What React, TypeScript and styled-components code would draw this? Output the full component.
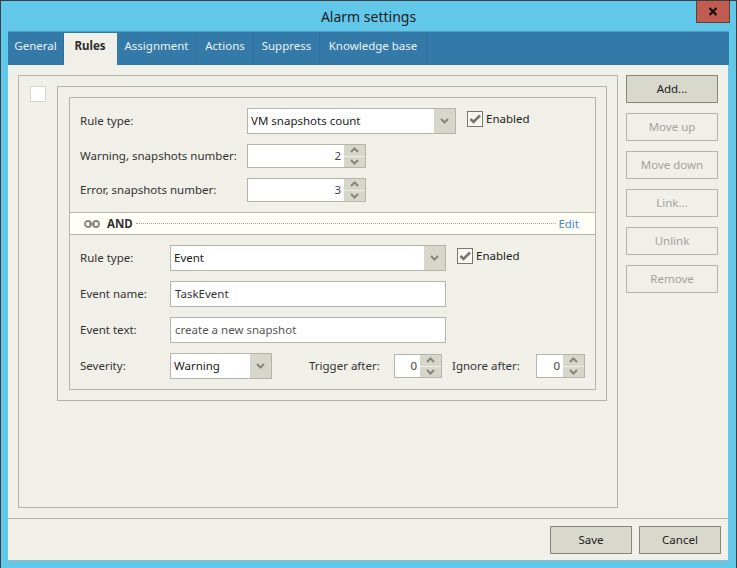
import React from 'react'
import styled, { createGlobalStyle } from 'styled-components'

const GlobalStyle = createGlobalStyle`
  html, body {
    margin: 0;
    padding: 0;
    background: #62c8ea;
  }
  * {
    box-sizing: border-box;
  }
`

const Frame = styled.div`
  position: relative;
  width: 737px;
  height: 568px;
  display: flex;
  flex-direction: column;
  background: #62c8ea;
  border-top: 1px solid #3a3f42;
  border-left: 1px solid #3a3f42;
  border-right: 1px solid #3a3f42;
  padding: 0 7px 7px 7px;
  font-family: 'Noto Sans', sans-serif;
  font-size: 11.5px;
  line-height: 14px;
  color: #2c2c2c;
`

const TitleBar = styled.div`
  height: 30px;
  flex: none;
  display: flex;
  align-items: center;
  justify-content: center;
  font-size: 14px;
  line-height: 19px;
  color: #1c1c1c;
`

const CloseButton = styled.div`
  position: absolute;
  top: 0;
  right: 6px;
  width: 34px;
  height: 22px;
  display: flex;
  align-items: center;
  justify-content: center;
  background: #c25b50;
  border: 1px solid #55433f;
  border-top: none;
`

const TabStrip = styled.div`
  height: 34px;
  flex: none;
  display: flex;
  align-items: flex-end;
  background: #347aa9;
  border-top: 1px solid #4f9dc6;
`

const Tab = styled.div<{ $active?: boolean; $width: number }>`
  width: ${({ $width }) => $width}px;
  height: 32px;
  display: flex;
  align-items: center;
  justify-content: center;
  padding-bottom: 6px;
  background: ${({ $active }) => ($active ? '#f0efe8' : 'transparent')};
  color: ${({ $active }) => ($active ? '#2c2c2c' : '#eaf2f6')};
  font-weight: ${({ $active }) => ($active ? 700 : 400)};
  border-right: 1px solid ${({ $active }) => ($active ? 'transparent' : '#2f6e99')};
`

const Body = styled.div`
  flex: 1;
  display: flex;
  flex-direction: column;
  margin-right: 1px;
  background: #f0efe8;
  border-bottom: 1px solid #9fb8bf;
`

const Main = styled.div`
  flex: 1;
  display: flex;
  gap: 8px;
  padding: 10px;
`

const OuterPanel = styled.div`
  width: 600px;
  display: flex;
  align-items: flex-start;
  gap: 11px;
  padding: 10px 0 0 11px;
  border: 1px solid #b5b4a9;
`

const RuleCheck = styled.div`
  width: 16px;
  height: 16px;
  flex: none;
  background: #fff;
  border: 1px solid #d6d6ce;
`

const GroupBox = styled.div`
  width: 550px;
  height: 315px;
  padding: 10px 10px 10px 11px;
  border: 1px solid #b5b4a9;
`

const InnerBox = styled.div`
  width: 527px;
  height: 293px;
  display: flex;
  flex-direction: column;
  gap: 10px;
  padding: 10px 0;
  border: 1px solid #b5b4a9;
`

const Row = styled.div`
  display: flex;
  align-items: center;
  padding-left: 10px;
`

const Label = styled.div<{ $width: number; $gap?: number }>`
  width: ${({ $width }) => $width}px;
  margin-left: ${({ $gap }) => $gap ?? 0}px;
  flex: none;
  white-space: nowrap;
  color: #333;
`

const Select = styled.div<{ $width: number }>`
  width: ${({ $width }) => $width}px;
  height: 26px;
  flex: none;
  display: flex;
  background: #fff;
  border: 1px solid #b5b4a9;
`

const FieldText = styled.div`
  flex: 1;
  min-width: 0;
  display: flex;
  align-items: center;
  padding-left: 3px;
  color: #222;
  white-space: nowrap;
`

const SelectArrow = styled.div`
  width: 21px;
  flex: none;
  display: flex;
  align-items: center;
  justify-content: center;
  background: #d6d6ca;
`

const Input = styled.div<{ $muted?: boolean }>`
  width: 276px;
  height: 26px;
  display: flex;
  align-items: center;
  padding-left: 4px;
  background: #fff;
  border: 1px solid #b5b4a9;
  color: ${({ $muted }) => ($muted ? '#555' : '#333')};
  white-space: nowrap;
`

const Spin = styled.div<{ $width: number }>`
  width: ${({ $width }) => $width}px;
  height: 24px;
  flex: none;
  display: flex;
  background: #fff;
  border: 1px solid #b5b4a9;
`

const SpinValue = styled.div`
  flex: 1;
  display: flex;
  align-items: center;
  justify-content: flex-end;
  padding-right: 3px;
  color: #444;
`

const SpinButtons = styled.div`
  width: 21px;
  flex: none;
  display: flex;
  flex-direction: column;
  gap: 1px;
  background: #f0efe8;
`

const SpinButton = styled.div`
  flex: 1;
  display: flex;
  align-items: center;
  justify-content: center;
  background: #d6d6ca;
`

const Enabled = styled.div`
  display: flex;
  align-items: center;
  gap: 3px;
  margin-left: 11px;
  margin-top: -4px;
  color: #222;
`

const CheckBox = styled.div`
  width: 16px;
  height: 16px;
  display: flex;
  align-items: center;
  justify-content: center;
  background: #f7f7f3;
  border: 1px solid #77776f;
`

const AndBar = styled.div`
  height: 23px;
  flex: none;
  display: flex;
  align-items: center;
  padding: 0 16px 0 14px;
  background: #fffff8;
  border-top: 1px solid #b5b4a9;
  border-bottom: 1px solid #b5b4a9;
`

const AndText = styled.div`
  margin-left: 7px;
  font-weight: 700;
  color: #333;
`

const Dots = styled.div`
  flex: 1;
  margin: 0 2px 0 3px;
  border-top: 1px dotted #a8a79c;
`

const EditLink = styled.div`
  color: #4a86c8;
`

const SideColumn = styled.div`
  width: 92px;
  display: flex;
  flex-direction: column;
  gap: 10px;
`

const Button = styled.div<{ $disabled?: boolean; $width?: number }>`
  width: ${({ $width }) => ($width ? `${$width}px` : '100%')};
  height: 28px;
  display: flex;
  align-items: center;
  justify-content: center;
  background: ${({ $disabled }) => ($disabled ? 'transparent' : '#d8d8cc')};
  border: 1px solid ${({ $disabled }) => ($disabled ? '#b5b4a9' : '#86867a')};
  color: ${({ $disabled }) => ($disabled ? '#a3a39c' : '#222')};
`

const Footer = styled.div`
  height: 42px;
  flex: none;
  display: flex;
  justify-content: flex-end;
  gap: 7px;
  padding: 7px 7px 0 0;
  border-top: 1px solid #b5b4a9;
`

const ChevronDown = () => (
  <svg width="9" height="6" viewBox="0 0 9 6">
    <path d="M1 1l3.5 3.5L8 1" fill="none" stroke="#85857a" strokeWidth="2" />
  </svg>
)

const ChevronUp = () => (
  <svg width="9" height="6" viewBox="0 0 9 6">
    <path d="M1 5l3.5-3.5L8 5" fill="none" stroke="#85857a" strokeWidth="2" />
  </svg>
)

const Check = () => (
  <svg width="12" height="10" viewBox="0 0 12 10">
    <path d="M1.5 5l3 3L11 1.5" fill="none" stroke="#77776f" strokeWidth="2.6" />
  </svg>
)

const LinkIcon = () => (
  <svg width="16" height="8" viewBox="0 0 16 8">
    <circle cx="4" cy="4" r="3" fill="none" stroke="#85857a" strokeWidth="1.8" />
    <circle cx="12" cy="4" r="3" fill="none" stroke="#85857a" strokeWidth="1.8" />
    <path d="M5 4h6" stroke="#85857a" strokeWidth="1.6" />
  </svg>
)

const CloseIcon = () => (
  <svg width="10" height="9" viewBox="0 0 10 9">
    <path d="M1.5 1l7 7M8.5 1l-7 7" stroke="#111" strokeWidth="2.2" />
  </svg>
)

function SelectBox({ width, value }: { width: number; value: string }) {
  return (
    <Select $width={width}>
      <FieldText>{value}</FieldText>
      <SelectArrow>
        <ChevronDown />
      </SelectArrow>
    </Select>
  )
}

function SpinBox({ width, value }: { width: number; value: number }) {
  return (
    <Spin $width={width}>
      <SpinValue>{value}</SpinValue>
      <SpinButtons>
        <SpinButton>
          <ChevronUp />
        </SpinButton>
        <SpinButton>
          <ChevronDown />
        </SpinButton>
      </SpinButtons>
    </Spin>
  )
}

function EnabledCheck() {
  return (
    <Enabled>
      <CheckBox>
        <Check />
      </CheckBox>
      Enabled
    </Enabled>
  )
}

const tabs = [
  { title: 'General', width: 56 },
  { title: 'Rules', width: 53, active: true },
  { title: 'Assignment', width: 80 },
  { title: 'Actions', width: 57 },
  { title: 'Suppress', width: 66 },
  { title: 'Knowledge base', width: 107 }
]

const sideButtons = ['Move up', 'Move down', 'Link...', 'Unlink', 'Remove']

export default function App() {
  return (
    <Frame>
      <GlobalStyle />
      <TitleBar>Alarm settings</TitleBar>
      <CloseButton>
        <CloseIcon />
      </CloseButton>
      <TabStrip>
        {tabs.map(tab => (
          <Tab key={tab.title} $active={tab.active} $width={tab.width}>
            {tab.title}
          </Tab>
        ))}
      </TabStrip>
      <Body>
        <Main>
          <OuterPanel>
            <RuleCheck />
            <GroupBox>
              <InnerBox>
                <Row>
                  <Label $width={167}>Rule type:</Label>
                  <SelectBox width={209} value="VM snapshots count" />
                  <EnabledCheck />
                </Row>
                <Row>
                  <Label $width={167}>Warning, snapshots number:</Label>
                  <SpinBox width={119} value={2} />
                </Row>
                <Row>
                  <Label $width={167}>Error, snapshots number:</Label>
                  <SpinBox width={119} value={3} />
                </Row>
                <AndBar>
                  <LinkIcon />
                  <AndText>AND</AndText>
                  <Dots />
                  <EditLink>Edit</EditLink>
                </AndBar>
                <Row>
                  <Label $width={90}>Rule type:</Label>
                  <SelectBox width={276} value="Event" />
                  <EnabledCheck />
                </Row>
                <Row>
                  <Label $width={90}>Event name:</Label>
                  <Input>TaskEvent</Input>
                </Row>
                <Row>
                  <Label $width={90}>Event text:</Label>
                  <Input $muted>create a new snapshot</Input>
                </Row>
                <Row>
                  <Label $width={90}>Severity:</Label>
                  <SelectBox width={102} value="Warning" />
                  <Label $width={85} $gap={37}>Trigger after:</Label>
                  <SpinBox width={48} value={0} />
                  <Label $width={84} $gap={10}>Ignore after:</Label>
                  <SpinBox width={49} value={0} />
                </Row>
              </InnerBox>
            </GroupBox>
          </OuterPanel>
          <SideColumn>
            <Button>Add...</Button>
            {sideButtons.map(title => (
              <Button key={title} $disabled>
                {title}
              </Button>
            ))}
          </SideColumn>
        </Main>
        <Footer>
          <Button $width={82}>Save</Button>
          <Button $width={82}>Cancel</Button>
        </Footer>
      </Body>
    </Frame>
  )
}
